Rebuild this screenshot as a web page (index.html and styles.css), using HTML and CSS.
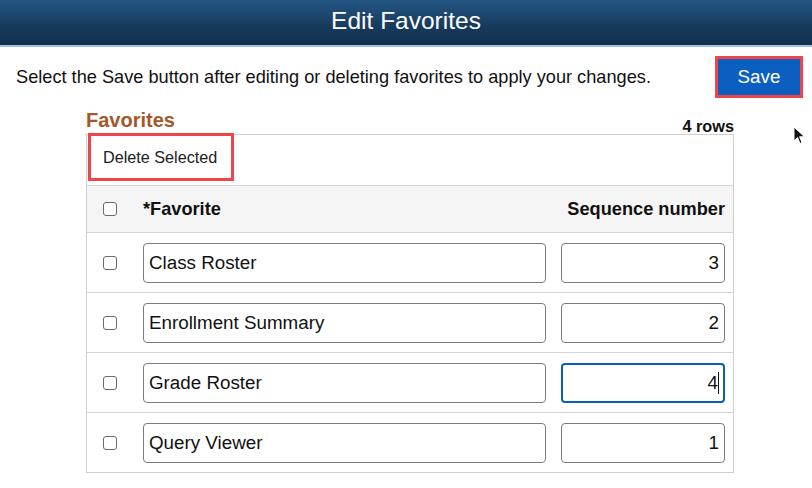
FILE: index.html
```html
<!DOCTYPE html>
<html>
<head>
<meta charset="utf-8">
<link rel="stylesheet" href="styles.css">
</head>
<body>
<header class="banner">Edit Favorites</header>
<div class="intro">
  <p class="intro-text">Select the Save button after editing or deleting favorites to apply your changes.</p>
  <div class="save-outline"><button class="save-btn">Save</button></div>
</div>
<section class="grid-wrap">
  <div class="grid-title">
    <h2 class="title">Favorites</h2>
    <span class="rows">4 rows</span>
  </div>
  <div class="grid">
    <div class="toolbar">
      <div class="delete-outline"><span class="delete-btn">Delete Selected</span></div>
    </div>
    <div class="row head">
      <span class="cb-cell"><span class="cb"></span></span>
      <span class="fav-col">*Favorite</span>
      <span class="seq-col">Sequence number</span>
    </div>
    <div class="row">
      <span class="cb-cell"><span class="cb"></span></span>
      <span class="fav-col"><span class="field">Class Roster</span></span>
      <span class="seq-col"><span class="field num">3</span></span>
    </div>
    <div class="row">
      <span class="cb-cell"><span class="cb"></span></span>
      <span class="fav-col"><span class="field">Enrollment Summary</span></span>
      <span class="seq-col"><span class="field num">2</span></span>
    </div>
    <div class="row">
      <span class="cb-cell"><span class="cb"></span></span>
      <span class="fav-col"><span class="field">Grade Roster</span></span>
      <span class="seq-col"><span class="field num focus">4<span class="caret"></span></span></span>
    </div>
    <div class="row">
      <span class="cb-cell"><span class="cb"></span></span>
      <span class="fav-col"><span class="field">Query Viewer</span></span>
      <span class="seq-col"><span class="field num">1</span></span>
    </div>
  </div>
</section>
<svg class="cursor" width="14" height="20" viewBox="0 0 14 20"><path d="M1 1 L1 15 L4.5 11.5 L7 17.5 L9 16.6 L6.6 10.8 L11.5 10.8 Z" fill="#111" stroke="#fff" stroke-width="1"/></svg>
</body>
</html>
```
FILE: styles.css
```css
* { box-sizing: border-box; }
html, body { margin: 0; padding: 0; background: #fff; }
body {
  font-family: "Liberation Sans", Arial, sans-serif;
  color: #111;
  width: 812px;
  height: 488px;
  overflow: hidden;
  position: relative;
}
.banner {
  height: 47px;
  background: linear-gradient(#235683, #163a5c 60%, #11304d);
  border-bottom: 2px solid #9cc3e3;
  color: #fff;
  font-size: 24.5px;
  text-align: center;
  line-height: 42px;
}
.intro {
  display: flex;
  align-items: center;
  justify-content: space-between;
  padding: 9px 9px 0 16px;
}
.intro-text {
  margin: 0;
  font-size: 18.2px;
}
.save-outline {
  border: 3px solid #f0434a;
  padding: 0;
  width: 88px;
  height: 42px;
}
.save-btn {
  display: block;
  width: 100%;
  height: 100%;
  border: 0;
  background: #0a5fc1;
  color: #fff;
  font-family: "Liberation Sans", Arial, sans-serif;
  font-size: 18.8px;
  padding: 0;
}
.grid-wrap {
  width: 648px;
  margin: 8px 0 0 86px;
}
.grid-title {
  display: flex;
  justify-content: space-between;
  align-items: flex-end;
  height: 28px;
}
.title {
  margin: 0;
  color: #a3582a;
  font-size: 20px;
  font-weight: bold;
  line-height: 22px;
  margin-bottom: 3px;
}
.rows {
  font-size: 16.3px;
  font-weight: bold;
  line-height: 16px;
  margin-bottom: 0px;
}
.grid {
  border: 1px solid #cfcfcf;
}
.toolbar {
  height: 51px;
  border-bottom: 1px solid #d6d6d6;
  position: relative;
}
.delete-outline {
  position: absolute;
  left: 1px;
  top: -2px;
  width: 146px;
  height: 48px;
  border: 3px solid #f0434a;
  display: flex;
  align-items: center;
  padding-left: 12px;
}
.delete-btn {
  font-size: 16.2px;
  color: #222;
}
.row {
  display: flex;
  align-items: center;
  height: 60px;
  border-bottom: 1px solid #d6d6d6;
  padding-right: 8px;
}
.row:last-child { border-bottom: 0; height: 59px; }
.row.head {
  height: 47px;
  background: #f5f5f5;
  font-weight: bold;
  font-size: 18.2px;
}
.cb-cell {
  width: 56px;
  display: flex;
  padding-left: 16px;
}
.cb {
  width: 14px;
  height: 14px;
  border: 1px solid #6b6b6b;
  border-radius: 3px;
  background: #fff;
}
.fav-col {
  flex: 1;
  padding-right: 15px;
}
.seq-col {
  width: 164px;
  text-align: right;
}
.field {
  display: flex;
  align-items: center;
  height: 40px;
  border: 1px solid #7c7c7c;
  border-radius: 4px;
  padding: 0 5px;
  font-size: 18.8px;
  background: #fff;
}
.field.num {
  justify-content: flex-end;
  padding-right: 5px;
}
.field.focus {
  border: 2px solid #0a5cc2;
  padding-right: 4px;
}
.caret {
  display: inline-block;
  width: 1px;
  height: 22px;
  background: #111;
}
.cursor {
  position: absolute;
  left: 793px;
  top: 126px;
}
```
